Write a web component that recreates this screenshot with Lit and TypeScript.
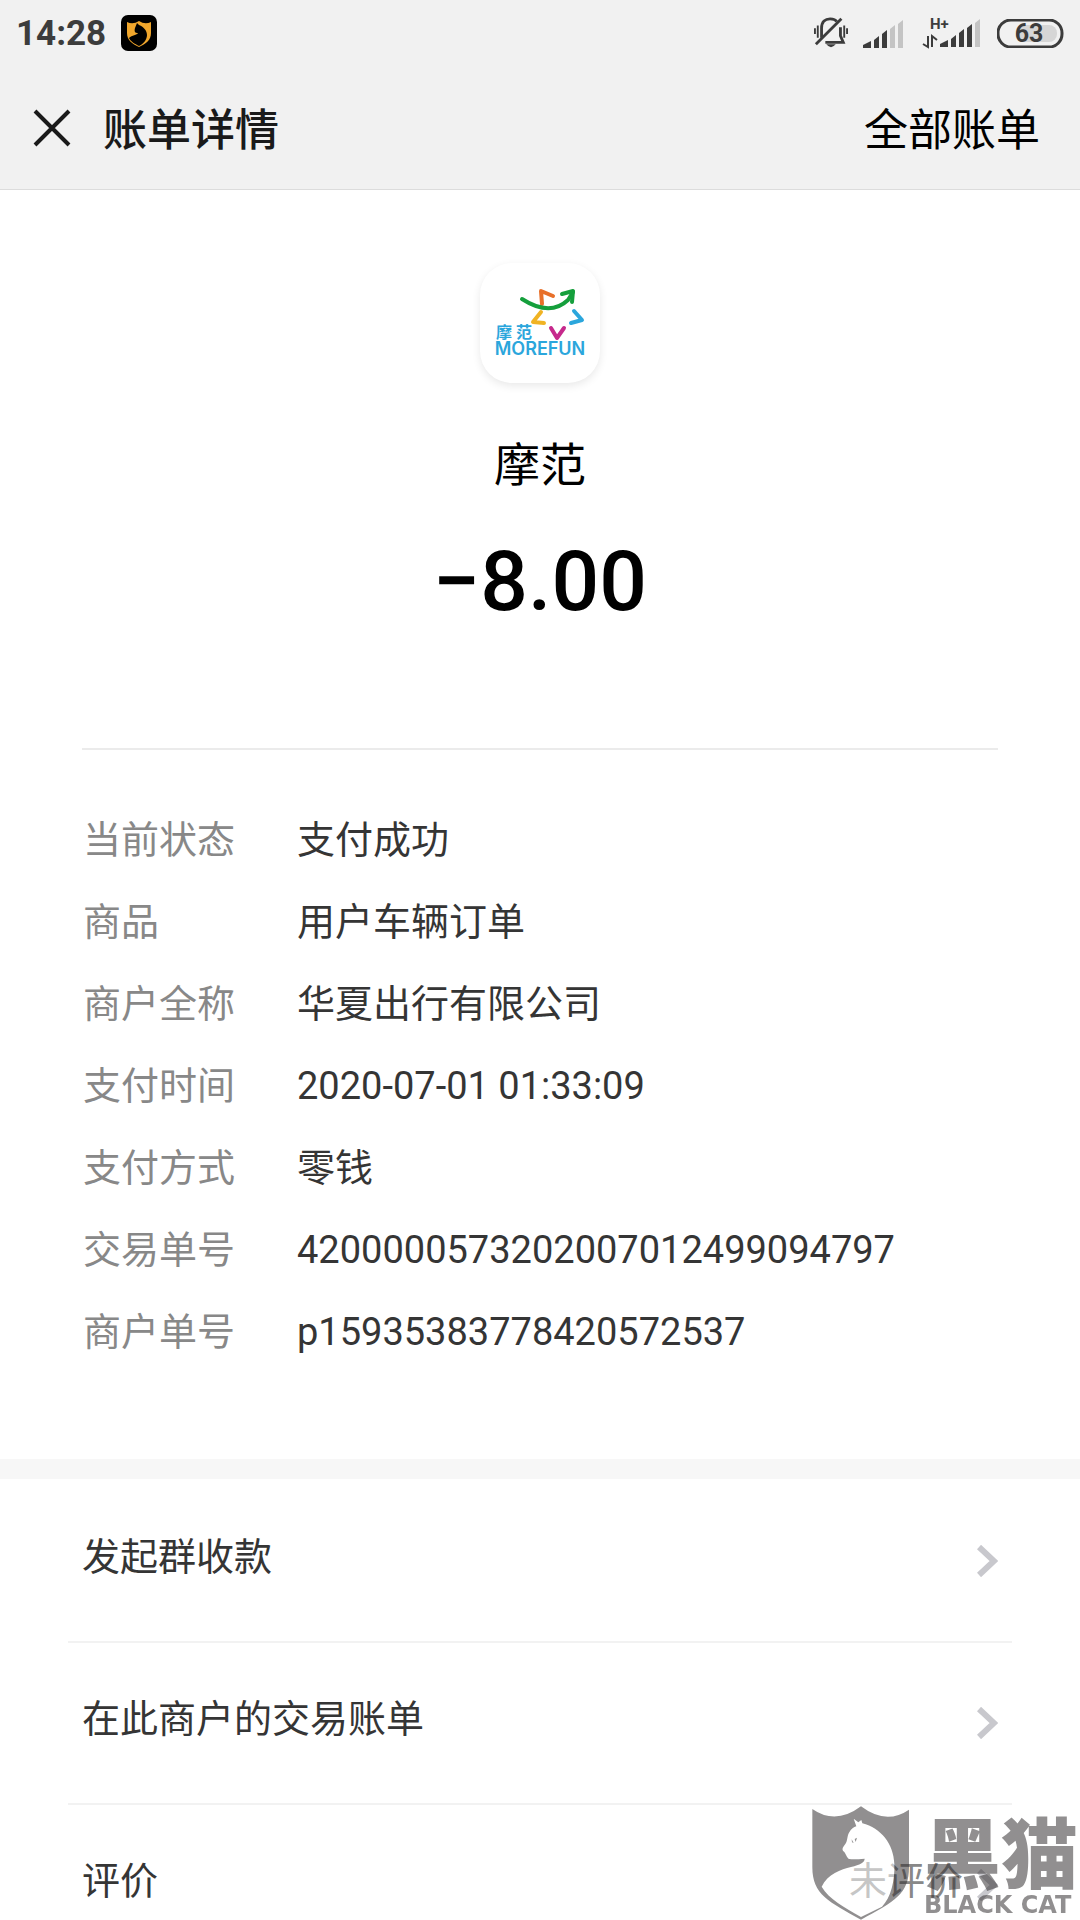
import { html, css, svg, LitElement } from 'lit';
import { customElement, property } from 'lit/decorators.js';

interface Detail {
  label: string;
  value: string;
}

interface Action {
  label: string;
  note?: string;
}

@customElement('status-bar')
export class StatusBar extends LitElement {
  static styles = css`
    :host {
      display: flex;
      align-items: center;
      justify-content: space-between;
      height: 66px;
      padding: 0 16px;
      color: #3c3c3c;
    }

    .side {
      display: flex;
      align-items: center;
      gap: 15px;
    }

    .time {
      padding-top: 2px;
      font-size: 35px;
      font-weight: 700;
      line-height: 40px;
    }

    .icon {
      display: block;
    }

    .small {
      font-size: 15px;
      font-weight: 700;
    }

    .level {
      font-size: 25px;
      font-weight: 700;
    }
  `;

  __renderBars(strong: number, offset: number) {
    return [0, 1, 2, 3, 4].map((i) => {
      const x = offset + i * 8;
      const left = i === 0 ? x - 3 : x;
      const top = [22, 17, 11, 6, 1][i];
      return svg`
        <path
          d="M${left} ${top + 4} L${x + 5} ${top} V29 H${left}Z"
          fill=${i < strong ? '#3c3c3c' : '#c4c4c4'}
        />
      `;
    });
  }

  render() {
    return html`
      <div class="side">
        <span class="time">14:28</span>
        <svg class="icon" width="36" height="36" viewBox="0 0 36 36">
          <rect width="36" height="36" rx="7" />
          <path
            fill="#f0a62c"
            d="M6 7Q12 10 18 6Q24 10 30 7V18C30 25 25 29 18 32C11 29 6 25 6 18Z"
          />
          <path
            d="M14 13L16 8L18 10C23 12 26 16 26 20C26 25 22 29 18 31C14 29 9 26 8 23
               C11 20 16 20 17 18C14 18 13 17 14 13Z"
          />
        </svg>
      </div>
      <div class="side">
        <svg class="icon" width="34" height="36" viewBox="0 0 36 36" fill="none"
          stroke="#3c3c3c" stroke-width="2">
          <path d="M1 13V19M4 10V23M32 10V23M35 13V19" />
          <path d="M8 23V13C8 6 12 3 17 3C20 3 23 4 24 6" stroke-width="3" />
          <path d="M28 12V21L31 28H12" stroke-width="3" />
          <path d="M2 30L29 3" stroke-width="3" />
          <path d="M13 30H23Q18 36 13 30Z" fill="#3c3c3c" stroke="none" />
        </svg>
        <svg class="icon" width="44" height="29" viewBox="-3 0 44 29">
          ${this.__renderBars(3, 0)}
        </svg>
        <svg class="icon" width="60" height="41" viewBox="0 -5 60 41">
          <text class="small" x="8" y="11" fill="#3c3c3c">H+</text>
          <path d="M6 18V29L1 26M10 29V18L15 22" fill="none" stroke="#3c3c3c" stroke-width="2" />
          ${this.__renderBars(4, 21)}
        </svg>
        <svg class="icon" width="67" height="29" viewBox="0 0 67 29">
          <rect x="20" y="6" width="40" height="17" rx="8" fill="#d6d6d6" />
          <rect x="1" y="1" width="64" height="27" rx="13" fill="none"
            stroke="#3c3c3c" stroke-width="3" />
          <text class="level" x="32" y="23" text-anchor="middle" fill="#3c3c3c">63</text>
        </svg>
      </div>
    `;
  }
}

@customElement('merchant-logo')
export class MerchantLogo extends LitElement {
  static styles = css`
    :host {
      display: block;
      width: 120px;
      height: 120px;
      border-radius: 32px;
      background: #fff;
      box-shadow: 0 3px 9px rgba(0, 0, 0, 0.09);
    }

    .logo {
      display: block;
    }

    .name {
      font-family: 'Noto Sans CJK SC', sans-serif;
      font-size: 16px;
      font-weight: 700;
    }

    .latin {
      font-family: Inter, sans-serif;
      font-size: 18px;
      font-weight: 600;
    }
  `;

  render() {
    return html`
      <svg class="logo" width="120" height="120" viewBox="0 0 120 120">
        <g fill="none" stroke-width="4" stroke-linecap="round" stroke-linejoin="round">
          <path d="M62 41L61 28L73 33" stroke="#e8702a" />
          <path d="M61 49L53 59L64 60" stroke="#f0b323" />
          <path d="M94 48L102 57L91 60" stroke="#2ba6dc" />
          <path d="M71 65L77 75L84 65" stroke="#c6298c" />
          <path d="M42 36Q70 54 88 37L93 29" stroke="#159f3c" />
          <path d="M82 31L93 28L92 39" stroke="#159f3c" />
        </g>
        <g fill="#2ba6dc">
          <text class="name" x="16 36" y="75">摩范</text>
          <text class="latin" x="60" y="92" text-anchor="middle">MOREFUN</text>
        </g>
      </svg>
    `;
  }
}

@customElement('black-cat-mark')
export class BlackCatMark extends LitElement {
  static styles = css`
    :host {
      display: flex;
      align-items: flex-start;
      gap: 14px;
      color: #2d2a2b;
      opacity: 0.52;
      pointer-events: none;
    }

    .shield {
      display: block;
    }

    .words {
      display: flex;
      flex-direction: column;
      padding-top: 4px;
    }

    .name {
      font-family: 'Noto Sans CJK SC', sans-serif;
      font-size: 77px;
      font-weight: 900;
      line-height: 80px;
    }

    .latin {
      font-family: 'DejaVu Sans', sans-serif;
      font-size: 24px;
      font-weight: 700;
      line-height: 30px;
    }
  `;

  render() {
    return html`
      <svg class="shield" width="98" height="114" viewBox="33 46 294 342">
        <path
          fill="#2d2a2b"
          d="M34 55Q104 104 180 47Q255 104 324 57V230C324 310 282 332 180 387
             C84 334 34 312 34 230Z"
        />
        <path
          fill="#fff"
          d="M166 107L158 84L172 95L181 88L184 98C240 112 278 160 280 220
             C282 270 270 320 243 348L180 379C130 350 84 326 62 288
             C80 250 120 236 150 229C178 222 190 216 191 204
             C170 206 155 207 145 205C138 203 137 194 130 184
             C122 178 123 172 133 160C140 150 138 136 144 126C151 114 158 110 166 107Z"
        />
        <path fill="#2d2a2b" d="M152 146L158 157L153 155ZM161 145L168 141L164 154Z" />
      </svg>
      <div class="words">
        <span class="name">黑猫</span>
        <span class="latin">BLACK CAT</span>
      </div>
    `;
  }
}

@customElement('app-root')
export class AppRoot extends LitElement {
  static styles = css`
    :host {
      --_text-color: #353535;
      --_muted-color: #888;
      --_bar-color: #f1f1f1;

      display: flex;
      flex-direction: column;
      height: 100vh;
      background: #fff;
      color: var(--_text-color);
      font-family: Roboto, 'Noto Sans CJK SC', sans-serif;
      font-size: 38px;
    }

    a {
      color: inherit;
      text-decoration: none;
    }

    .top {
      flex: none;
      background: var(--_bar-color);
      border-bottom: 1px solid #dcdcdc;
    }

    .nav {
      display: flex;
      align-items: center;
      height: 123px;
      padding: 0 40px 0 32px;
      font-size: 44px;
      line-height: 60px;
    }

    .close {
      display: block;
      padding: 0;
      border: 0;
      background: none;
    }

    .close-icon {
      display: block;
    }

    .title {
      flex: 1;
      margin: 0 0 0 31px;
      padding-top: 6px;
      font-size: inherit;
      font-weight: 500;
      color: #1a1a1a;
    }

    .all {
      padding-top: 6px;
      color: #000;
    }

    .content {
      flex: 1;
      min-height: 0;
      overflow-y: auto;
      scrollbar-width: none;
    }

    .summary {
      display: flex;
      flex-direction: column;
      align-items: center;
      margin: 0 82px;
      padding: 73px 0 116px;
      border-bottom: 2px solid #ebebeb;
      color: #000;
    }

    .merchant {
      margin-top: 52px;
      font-size: 46px;
      line-height: 60px;
    }

    .amount {
      margin-top: 37px;
      font-size: 84px;
      font-weight: 500;
      line-height: 100px;
    }

    .details {
      display: grid;
      grid-template-columns: 214px 1fr;
      row-gap: 24px;
      margin: 0;
      padding: 61px 83px 98px;
      border-bottom: 20px solid #f7f7f7;
      line-height: 58px;
    }

    .label {
      color: var(--_muted-color);
    }

    .value {
      margin: 0;
    }

    .actions {
      margin: 0 68px;
      padding: 2px 0 0;
      list-style: none;
    }

    .action {
      display: flex;
      align-items: center;
      gap: 14px;
      height: 160px;
      padding: 0 14px;
      border-bottom: 2px solid #f2f2f2;
      line-height: 58px;
    }

    .action-label,
    .note {
      padding-bottom: 8px;
    }

    .action-label {
      flex: 1;
    }

    .note {
      color: var(--_muted-color);
    }

    .mark {
      position: fixed;
      right: 2px;
      bottom: 0;
    }
  `;

  @property({ type: Array }) details: Detail[] = [
    { label: '当前状态', value: '支付成功' },
    { label: '商品', value: '用户车辆订单' },
    { label: '商户全称', value: '华夏出行有限公司' },
    { label: '支付时间', value: '2020-07-01 01:33:09' },
    { label: '支付方式', value: '零钱' },
    { label: '交易单号', value: '4200000573202007012499094797' },
    { label: '商户单号', value: 'p15935383778420572537' },
  ];

  @property({ type: Array }) actions: Action[] = [
    { label: '发起群收款' },
    { label: '在此商户的交易账单' },
    { label: '评价', note: '未评价' },
  ];

  __renderHeader() {
    return html`
      <header class="top">
        <status-bar></status-bar>
        <nav class="nav">
          <button class="close" aria-label="关闭">
            <svg class="close-icon" width="40" height="40" viewBox="0 0 40 40">
              <path d="M3 3L37 37M37 3L3 37" stroke="#1a1a1a" stroke-width="4" />
            </svg>
          </button>
          <h1 class="title">账单详情</h1>
          <a class="all" href="#all">全部账单</a>
        </nav>
      </header>
    `;
  }

  __renderAction(action: Action) {
    return html`
      <li>
        <a class="action" href="#action">
          <span class="action-label">${action.label}</span>
          ${action.note ? html`<span class="note">${action.note}</span>` : ''}
          <svg width="21" height="32" viewBox="0 0 21 32">
            <path d="M2 2L17 16L2 30" fill="none" stroke="#c8c8cd" stroke-width="6" />
          </svg>
        </a>
      </li>
    `;
  }

  render() {
    return html`
      ${this.__renderHeader()}
      <main class="content">
        <section class="summary">
          <merchant-logo></merchant-logo>
          <span class="merchant">摩范</span>
          <span class="amount">−8.00</span>
        </section>
        <dl class="details">
          ${this.details.map(
            (item) => html`
              <dt class="label">${item.label}</dt>
              <dd class="value">${item.value}</dd>
            `
          )}
        </dl>
        <ul class="actions">
          ${this.actions.map((action) => this.__renderAction(action))}
        </ul>
      </main>
      <black-cat-mark class="mark"></black-cat-mark>
    `;
  }
}
